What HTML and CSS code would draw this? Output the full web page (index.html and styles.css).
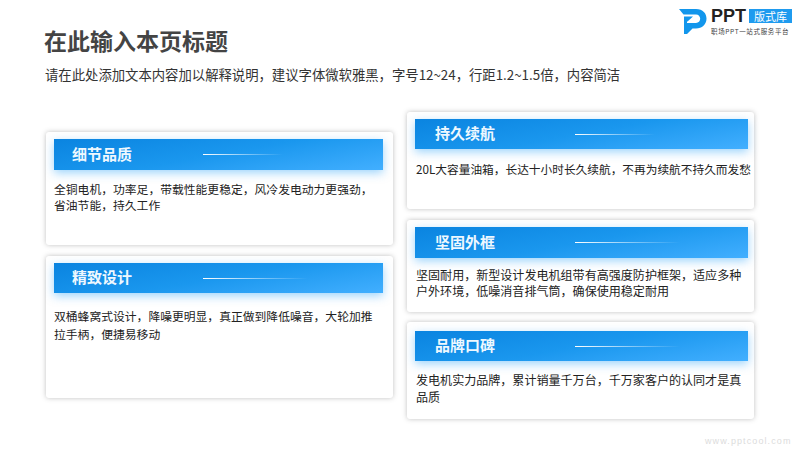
FILE: index.html
```html
<!DOCTYPE html>
<html lang="zh">
<head>
<meta charset="utf-8">
<title>在此输入本页标题</title>
<link rel="stylesheet" href="styles.css">
</head>
<body>
<div class="slide">
  <div class="logo">
    <svg class="logo-mark" width="28" height="25" viewBox="0 0 28 25">
      <path d="M0 0H17C24 0 27.500 4.500 27.500 9.500C27.500 15.500 23 19.500 17 19.500H13.500L8 25V14H17C19.500 14 21.200 12 21.200 9.800C21.200 7.500 19.500 5.500 17 5.500H4.500Z" fill="#1296ec"/>
      <path d="M5 7.500H14L8.500 12.500H8V25H5Z" fill="#1296ec"/>
    </svg>
    <div class="logo-text">
      <div class="logo-top"><span class="logo-ppt">PPT</span><span class="logo-badge">版式库</span></div>
      <div class="logo-sub">职场PPT一站式服务平台</div>
    </div>
  </div>
  <h1 class="title">在此输入本页标题</h1>
  <p class="subtitle">请在此处添加文本内容加以解释说明，建议字体微软雅黑，字号12~24，行距1.2~1.5倍，内容简洁</p>
  <div class="columns">
    <div class="col col-left">
      <section class="card card-detail">
        <div class="bar"><span class="bar-title">细节品质</span><i class="bar-line"></i></div>
        <p class="body">全铜电机，功率足，带载性能更稳定，风冷发电动力更强劲，<br>省油节能，持久工作</p>
      </section>
      <section class="card card-design">
        <div class="bar"><span class="bar-title">精致设计</span><i class="bar-line"></i></div>
        <p class="body">双桶蜂窝式设计，降噪更明显，真正做到降低噪音，大轮加推<br>拉手柄，便捷易移动</p>
      </section>
    </div>
    <div class="col col-right">
      <section class="card card-battery">
        <div class="bar"><span class="bar-title">持久续航</span><i class="bar-line"></i></div>
        <p class="body">20L大容量油箱，长达十小时长久续航，不再为续航不持久而发愁</p>
      </section>
      <section class="card card-frame">
        <div class="bar"><span class="bar-title">坚固外框</span><i class="bar-line"></i></div>
        <p class="body">坚固耐用，新型设计发电机组带有高强度防护框架，适应多种<br>户外环境，低噪消音排气筒，确保使用稳定耐用</p>
      </section>
      <section class="card card-brand">
        <div class="bar"><span class="bar-title">品牌口碑</span><i class="bar-line"></i></div>
        <p class="body">发电机实力品牌，累计销量千万台，千万家客户的认同才是真<br>品质</p>
      </section>
    </div>
  </div>
  <div class="watermark">www.pptcool.com</div>
</div>
</body>
</html>
```

FILE: styles.css
```css
* { box-sizing: border-box; margin: 0; padding: 0; }
html, body { width: 800px; height: 450px; overflow: hidden; background: #fff; }
body { font-family: "Noto Sans CJK SC", "Liberation Sans", sans-serif; }
.slide { position: relative; width: 800px; height: 450px; padding: 24px 0 0 44px; }
.logo { position: absolute; top: 9px; left: 679px; display: flex; gap: 4px; }
.logo-text { display: flex; flex-direction: column; }
.logo-top { display: flex; align-items: center; gap: 3px; height: 14px; }
.logo-ppt { font: 700 18px/14px "Liberation Sans", sans-serif; color: #222; }
.logo-badge { width: 43px; height: 14px; background: #1f9bef; color: #fff; font-size: 11px; line-height: 14px; text-align: center; }
.logo-sub { font-size: 6.500px; line-height: 10px; margin-top: 3px; color: #444; letter-spacing: .65px; white-space: nowrap; }
.title { font-size: 23px; line-height: 32px; font-weight: 700; color: #444; }
.subtitle { margin: 10px 0 0 1px; font-size: 13.350px; line-height: 18px; color: #333; white-space: nowrap; }
.columns { display: flex; gap: 14px; margin-top: 28px; margin-left: 2px; }
.col { display: flex; flex-direction: column; width: 347px; }
.col-left { padding-top: 20px; gap: 11px; }
.col-right { gap: 11px; }
.card { background: #fff; border-radius: 3px; box-shadow: 0 0 5px rgba(90, 90, 90, .38); padding: 7px 10px 0 8px; }
.card-detail { height: 113px; }
.card-design { height: 142px; }
.col-right .card { padding-right: 6px; }
.card-battery { height: 97px; }
.card-frame { height: 92px; }
.col-right .card-brand { height: 97px; margin-top: -1px; padding-top: 9px; }
.bar { position: relative; display: flex; align-items: center; height: 30px; padding: 0 0 3px 18px; background: linear-gradient(170deg, #0a84e0 0%, #1a97ee 50%, #42afff 100%); box-shadow: 0 3px 10px rgba(60, 170, 250, .5); }
.card-detail .bar, .card-frame .bar { height: 31px; }
.bar-title { font-size: 15px; font-weight: 700; color: #eef8ff; }
.bar-line { position: absolute; left: 149px; top: 15px; width: 80px; height: 1px; background: linear-gradient(90deg, #fff, rgba(255, 255, 255, 0)); }
.card-design .bar-line, .card-frame .bar-line, .card-brand .bar-line { width: 105px; }
.col-right .bar-line { left: 160px; }
.col-right .bar-title { margin-left: 2px; }
.body { font-size: 11.800px; color: #222; white-space: nowrap; }
.col-right .body { margin-left: 1px; }
.card-detail .body { margin-top: 11px; line-height: 16px; }
.card-design .body { margin-top: 14px; line-height: 18px; }
.card-battery .body { margin-top: 12px; line-height: 16px; font-size: 11.700px; }
.card-frame .body { margin-top: 9px; line-height: 16px; font-size: 12.050px; }
.card-brand .body { margin-top: 10px; line-height: 17px; font-size: 12.050px; }
.watermark { position: absolute; left: 705px; top: 435px; font: 9px/12px "Liberation Sans", sans-serif; letter-spacing: 1.100px; color: #dcdcdc; }
```
